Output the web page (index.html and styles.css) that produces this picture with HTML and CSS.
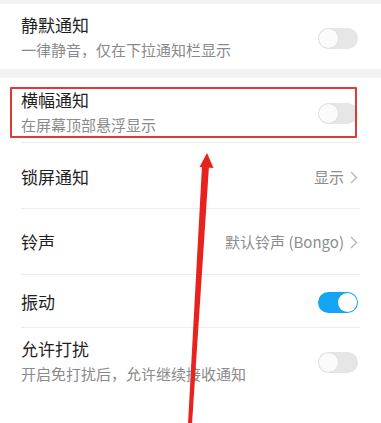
FILE: index.html
```html
<!DOCTYPE html>
<html lang="zh">
<head>
<meta charset="utf-8">
<link rel="stylesheet" href="styles.css">
</head>
<body>
<div class="page">
  <div class="band band-top"></div>
  <div class="row row-silent">
    <div class="texts">
      <div class="title">静默通知</div>
      <div class="sub">一律静音，仅在下拉通知栏显示</div>
    </div>
    <span class="switch"><span class="knob"></span></span>
  </div>
  <div class="band band-mid"></div>
  <div class="row row-banner">
    <div class="texts">
      <div class="title">横幅通知</div>
      <div class="sub">在屏幕顶部悬浮显示</div>
    </div>
    <span class="switch"><span class="knob"></span></span>
  </div>
  <div class="row row-single row-lock divided">
    <div class="title">锁屏通知</div>
    <div class="value">显示<svg class="chev" width="8" height="13" viewBox="0 0 8 13"><polyline points="1,1 6.5,6.5 1,12" fill="none" stroke="#b5b5b5" stroke-width="1.3"/></svg></div>
  </div>
  <div class="row row-single row-ring divided">
    <div class="title">铃声</div>
    <div class="value">默认铃声 (Bongo)<svg class="chev" width="8" height="13" viewBox="0 0 8 13"><polyline points="1,1 6.5,6.5 1,12" fill="none" stroke="#b5b5b5" stroke-width="1.3"/></svg></div>
  </div>
  <div class="row row-single row-vibe divided">
    <div class="title">振动</div>
    <span class="switch on"><span class="knob"></span></span>
  </div>
  <div class="row row-dnd divided">
    <div class="texts">
      <div class="title">允许打扰</div>
      <div class="sub">开启免打扰后，允许继续接收通知</div>
    </div>
    <span class="switch"><span class="knob"></span></span>
  </div>

  <div class="highlight"></div>
  <svg class="arrow" width="381" height="423" viewBox="0 0 381 423">
    <polygon points="188,424 192,424 209,166 202,166" fill="#e8231e"/>
    <polygon points="207,153 213.5,168 199.5,167" fill="#e8231e"/>
  </svg>
</div>
</body>
</html>
```
FILE: styles.css
```css
* { box-sizing: border-box; }
html, body {
  margin: 0;
  padding: 0;
  background: #ffffff;
}
body {
  font-family: "Noto Sans CJK SC", "Noto Sans", sans-serif;
  width: 381px;
  height: 423px;
  overflow: hidden;
}
.page {
  position: relative;
  width: 381px;
  height: 423px;
  background: #ffffff;
}
.band { background: #f2f2f2; }
.band-top { height: 4px; }
.band-mid { height: 9px; }

.row {
  display: flex;
  align-items: center;
  justify-content: space-between;
  padding: 0 23px 0 21px;
  position: relative;
  background: #fff;
}
.divided::before {
  content: "";
  position: absolute;
  left: 21px;
  right: 21px;
  top: 0;
  height: 1px;
  background: #ececec;
}
.texts { display: flex; flex-direction: column; gap: 1px; }
.title {
  font-size: 17px;
  line-height: 24px;
  color: #1f1f1f;
}
.sub {
  font-size: 15px;
  line-height: 24px;
  color: #8a8a8a;
}
.row-silent { height: 65px; padding-top: 2px; }
.row-banner { height: 64px; padding-top: 5px; }
.row-single { padding-top: 2px; }
.row-lock { height: 66px; padding-top: 4px; }
.row-ring { height: 66px; padding-top: 2px; }
.row-vibe { height: 53px; padding-top: 3px; }
.row-dnd { height: 72px; padding-top: 0; padding-bottom: 3px; }

.value {
  display: flex;
  align-items: center;
  gap: 6px;
  font-size: 15px;
  color: #8c8c8c;
  line-height: 22px;
}
.chev { display: block; margin-right: 0px; }

.switch {
  width: 40px;
  height: 21px;
  border-radius: 11px;
  background: #e6e6e6;
  position: relative;
  flex: none;
  margin-top: 2px;
}
.row-single .switch { margin-top: 0; }
.switch .knob {
  position: absolute;
  top: 1px;
  left: 1px;
  width: 19px;
  height: 19px;
  border-radius: 50%;
  background: #fbfbfb;
  box-shadow: 0 0 0 0.6px #dcdcdc;
}
.switch.on { background: #14a4f4; }
.switch.on .knob {
  left: auto;
  right: 1px;
  background: #ffffff;
  box-shadow: none;
}

.highlight {
  position: absolute;
  left: 10px;
  top: 87px;
  width: 347px;
  height: 51px;
  border: 2px solid #e0393a;
  border-radius: 1px;
  pointer-events: none;
}
.arrow {
  position: absolute;
  left: 0;
  top: 0;
  pointer-events: none;
}
```
